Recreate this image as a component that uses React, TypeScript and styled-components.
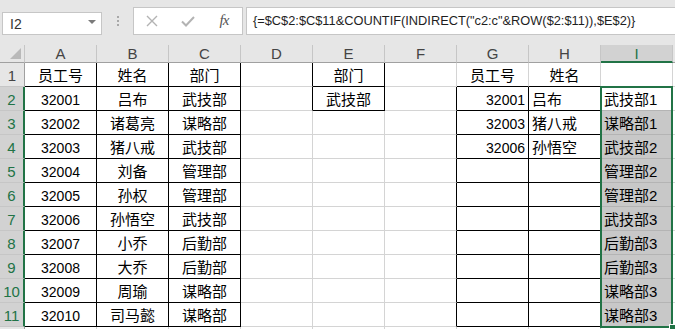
import React from "react";
import styled, { createGlobalStyle } from "styled-components";

const GREEN = "#217346";
const GRID = "#d4d4d4";
const BLACK = "#000000";

const GlobalStyle = createGlobalStyle`
  html, body { margin: 0; padding: 0; background: #ffffff; overflow: hidden; }
  body { font-family: "Liberation Sans", "Noto Sans CJK SC", sans-serif; }
`;

const Page = styled.div`
  width: 675px;
  height: 329px;
  overflow: hidden;
  background: #ffffff;
`;

const Toolbar = styled.div`
  height: 45px;
  box-sizing: border-box;
  background: #e6e6e6;
  display: flex;
  align-items: flex-start;
  padding: 7px 0 0 2px;
`;

const NameBox = styled.div`
  margin-top: 5px;
  width: 100px;
  height: 23px;
  box-sizing: border-box;
  background: #ffffff;
  border: 1px solid #c6c6c6;
  display: flex;
  align-items: center;
  justify-content: space-between;
  padding: 0 5px 0 7px;
  font-size: 14px;
  color: #333333;
`;

const Caret = styled.span`
  width: 0;
  height: 0;
  border-left: 4px solid transparent;
  border-right: 4px solid transparent;
  border-top: 4px solid #7a7a7a;
  margin-top: -3px;
`;

const Grip = styled.div`
  margin: 9px 14px 0 15px;
  width: 2px;
  display: flex;
  flex-direction: column;
  gap: 2px;
`;

const GripDot = styled.span`
  width: 2px;
  height: 2px;
  background: #a8a8a8;
`;

const ButtonBox = styled.div`
  width: 110px;
  height: 28px;
  box-sizing: border-box;
  background: #ffffff;
  border: 1px solid #c6c6c6;
  display: grid;
  grid-template-columns: repeat(3, 36px);
  align-items: center;
  justify-items: center;
`;

const FxLabel = styled.span`
  font-family: "Liberation Serif", serif;
  font-style: italic;
  font-size: 15px;
  color: #555555;
  letter-spacing: -1px;
  margin-top: -2px;
`;

const FormulaBox = styled.div`
  margin-left: 3px;
  margin-right: -4px;
  flex: 1;
  height: 28px;
  box-sizing: border-box;
  background: #ffffff;
  border: 1px solid #c6c6c6;
  display: flex;
  align-items: center;
  padding: 0 0 1px 6px;
  font-size: 12.8px;
  color: #1e1e1e;
  white-space: nowrap;
  overflow: hidden;
`;

const Sheet = styled.div`
  position: relative;
  display: grid;
  grid-template-columns: 25px repeat(9, 72px) 1fr;
  grid-template-rows: 18px repeat(12, 24px);
`;

const Corner = styled.div`
  position: relative;
  background: #e6e6e6;
  box-sizing: border-box;
  border-right: 1px solid #c6c6c6;
  border-bottom: 1px solid #a0a0a0;
  &::after {
    content: "";
    position: absolute;
    right: 3px;
    bottom: 3px;
    width: 0;
    height: 0;
    border-left: 11px solid transparent;
    border-bottom: 11px solid #b9b9b9;
  }
`;

const ColHeader = styled.div<{ $sel?: boolean }>`
  box-sizing: border-box;
  background: ${(p) => (p.$sel ? "#d2d2d2" : "#e6e6e6")};
  border-right: 1px solid #c6c6c6;
  border-bottom: ${(p) => (p.$sel ? `2px solid ${GREEN}` : "1px solid #a0a0a0")};
  display: flex;
  align-items: center;
  justify-content: center;
  font-size: 15px;
  color: ${(p) => (p.$sel ? GREEN : "#444444")};
`;

const RowHeader = styled.div<{ $sel?: boolean }>`
  box-sizing: border-box;
  background: ${(p) => (p.$sel ? "#d2d2d2" : "#e6e6e6")};
  border-bottom: 1px solid #c6c6c6;
  border-right: ${(p) => (p.$sel ? `2px solid ${GREEN}` : "1px solid #a0a0a0")};
  display: flex;
  align-items: center;
  justify-content: center;
  padding-top: 2px;
  font-size: 15px;
  color: ${(p) => (p.$sel ? GREEN : "#444444")};
`;

const Cell = styled.div<{
  $right: string;
  $bottom: string;
  $align: "left" | "center" | "right";
  $num?: boolean;
  $bg?: string;
}>`
  box-sizing: border-box;
  border-right: 1px solid ${(p) => p.$right};
  border-bottom: 1px solid ${(p) => p.$bottom};
  background: ${(p) => p.$bg || "#ffffff"};
  display: flex;
  align-items: center;
  justify-content: ${(p) =>
    p.$align === "left" ? "flex-start" : p.$align === "right" ? "flex-end" : "center"};
  padding: 2px 3px 0 3px;
  font-size: ${(p) => (p.$num ? "14px" : "15px")};
  color: #000000;
  white-space: nowrap;
  overflow: hidden;
  line-height: 1;
`;

const Selection = styled.div`
  position: absolute;
  left: 600px;
  top: 41px;
  width: 73px;
  height: 242px;
  box-sizing: border-box;
  border: 2px solid ${GREEN};
  pointer-events: none;
`;

const FillHandle = styled.div`
  position: absolute;
  right: -5px;
  bottom: -5px;
  width: 7px;
  height: 7px;
  box-sizing: border-box;
  background: ${GREEN};
  border-left: 1px solid #ffffff;
  border-top: 1px solid #ffffff;
`;

type Align = "left" | "center" | "right";
type CellData = { text: string; align: Align; num?: boolean };

const COLS = ["A", "B", "C", "D", "E", "F", "G", "H", "I"];

const ids = ["32001", "32002", "32003", "32004", "32005", "32006", "32007", "32008", "32009", "32010"];
const names = ["吕布", "诸葛亮", "猪八戒", "刘备", "孙权", "孙悟空", "小乔", "大乔", "周瑜", "司马懿"];
const depts = ["武技部", "谋略部", "武技部", "管理部", "管理部", "武技部", "后勤部", "后勤部", "谋略部", "谋略部"];
const results = ["武技部1", "谋略部1", "武技部2", "管理部2", "管理部2", "武技部3", "后勤部3", "后勤部3", "谋略部3", "谋略部3"];
const found: [string, string][] = [
  ["32001", "吕布"],
  ["32003", "猪八戒"],
  ["32006", "孙悟空"],
];

function cellAt(r: number, c: number): CellData | null {
  if (r === 1) {
    const head: Record<number, string> = { 0: "员工号", 1: "姓名", 2: "部门", 4: "部门", 6: "员工号", 7: "姓名" };
    return head[c] ? { text: head[c], align: "center" } : null;
  }
  const i = r - 2;
  if (i < 0 || i > 9) return null;
  if (c === 0) return { text: ids[i], align: "center", num: true };
  if (c === 1) return { text: names[i], align: "center" };
  if (c === 2) return { text: depts[i], align: "center" };
  if (c === 4 && r === 2) return { text: "武技部", align: "center" };
  if (c === 6 && found[i]) return { text: found[i][0], align: "right", num: true };
  if (c === 7 && found[i]) return { text: found[i][1], align: "left" };
  if (c === 8) return { text: results[i], align: "left" };
  return null;
}

const ranges: [number, number, number, number][] = [
  [1, 11, 0, 2],
  [1, 2, 4, 4],
  [2, 11, 6, 7],
];
const inRange = (r: number, c: number) =>
  ranges.some(([r1, r2, c1, c2]) => r >= r1 && r <= r2 && c >= c1 && c <= c2);

const isSelected = (r: number, c: number) => c === 8 && r >= 2 && r <= 11;

const CloseIcon = () => (
  <svg width="12" height="12" viewBox="0 0 12 12">
    <path d="M1 1 L11 11 M11 1 L1 11" stroke="#b3b3b3" strokeWidth="1.4" fill="none" />
  </svg>
);

const CheckIcon = () => (
  <svg width="14" height="11" viewBox="0 0 14 11">
    <path d="M1 5.5 L5 9.5 L13 1" stroke="#b3b3b3" strokeWidth="2" fill="none" />
  </svg>
);

export default function App() {
  const rows: React.ReactNode[] = [];
  for (let r = 1; r <= 12; r++) {
    rows.push(
      <RowHeader key={`rh${r}`} $sel={r >= 2 && r <= 11}>
        {r <= 11 ? r : null}
      </RowHeader>
    );
    for (let c = 0; c < 9; c++) {
      const d = cellAt(r, c);
      const right = inRange(r, c) || inRange(r, c + 1) ? BLACK : isSelected(r, c) ? "#b4b4b4" : GRID;
      const bottom = inRange(r, c) || inRange(r + 1, c) ? BLACK : isSelected(r, c) ? "#b4b4b4" : GRID;
      const bg = isSelected(r, c) && r > 2 ? "#c8c8c8" : undefined;
      rows.push(
        <Cell key={`c${r}-${c}`} $right={right} $bottom={bottom} $align={d?.align || "center"} $num={d?.num} $bg={bg}>
          {d?.text}
        </Cell>
      );
    }
    rows.push(<Cell key={`x${r}`} $right={GRID} $bottom={GRID} $align="left" />);
  }

  return (
    <Page>
      <GlobalStyle />
      <Toolbar>
        <NameBox>
          <span>I2</span>
          <Caret />
        </NameBox>
        <Grip>
          <GripDot />
          <GripDot />
          <GripDot />
        </Grip>
        <ButtonBox>
          <CloseIcon />
          <CheckIcon />
          <FxLabel>fx</FxLabel>
        </ButtonBox>
        <FormulaBox>{'{=$C$2:$C$11&COUNTIF(INDIRECT("c2:c"&ROW($2:$11)),$E$2)}'}</FormulaBox>
      </Toolbar>
      <Sheet>
        <Corner />
        {COLS.map((col) => (
          <ColHeader key={col} $sel={col === "I"}>
            {col}
          </ColHeader>
        ))}
        <ColHeader />
        {rows}
        <Selection>
          <FillHandle />
        </Selection>
      </Sheet>
    </Page>
  );
}
